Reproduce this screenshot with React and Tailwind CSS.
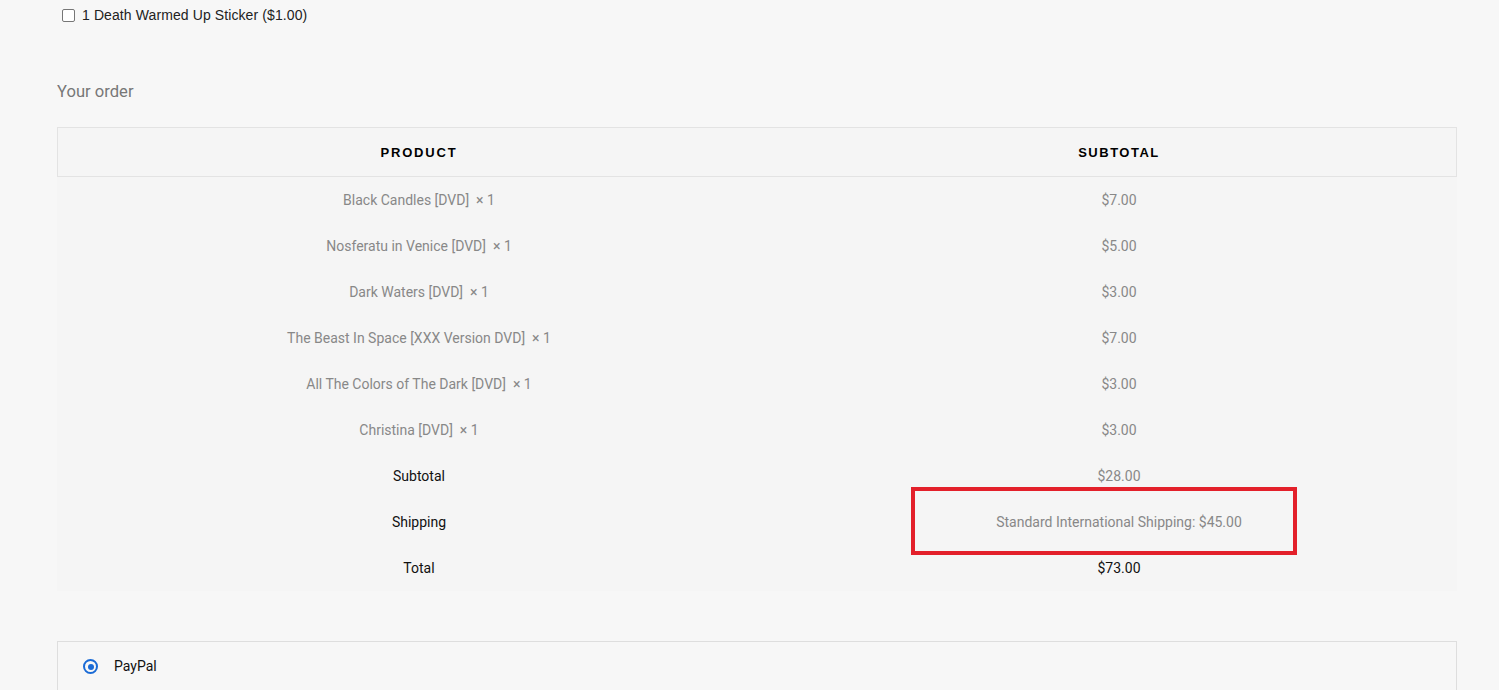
import React from 'react'

const items = [
  { name: 'Black Candles [DVD]', qty: 1, price: '$7.00' },
  { name: 'Nosferatu in Venice [DVD]', qty: 1, price: '$5.00' },
  { name: 'Dark Waters [DVD]', qty: 1, price: '$3.00' },
  { name: 'The Beast In Space [XXX Version DVD]', qty: 1, price: '$7.00' },
  { name: 'All The Colors of The Dark [DVD]', qty: 1, price: '$3.00' },
  { name: 'Christina [DVD]', qty: 1, price: '$3.00' },
]

const App = () => {
  return (
    <div className="min-h-[690px] bg-[#f7f7f7] font-['Roboto',sans-serif] overflow-hidden">
      <div className="px-[57px] pr-[42px]">
        <label className="flex items-center h-[30px] pl-[5px] font-['Liberation_Sans',Arial,sans-serif] text-[14px] tracking-[0.1px] text-[#222]">
          <span className="w-[13px] h-[13px] border border-[#767676] rounded-[2px] bg-white mr-[7px]" />
          1 Death Warmed Up Sticker ($1.00)
        </label>

        <h3 className="mt-[50px] text-[16.6px] leading-[24px] text-[#777] font-normal">Your order</h3>

        <table className="mt-[23px] w-full border-collapse bg-[#f5f5f5] text-[14px]">
          <thead>
            <tr className="h-[50px] outline outline-1 outline-[#e3e3e3] -outline-offset-1">
              <th className="w-[724px] pt-[2px] font-['Liberation_Sans',Arial,sans-serif] text-[13px] font-bold tracking-[1.8px] text-black">PRODUCT</th>
              <th className="pt-[2px] font-['Liberation_Sans',Arial,sans-serif] text-[13px] font-bold tracking-[1.5px] text-black">SUBTOTAL</th>
            </tr>
          </thead>
          <tbody>
            {items.map(item => (
              <tr key={item.name} className="h-[46px]">
                <td className="text-center text-[#888]">
                  {item.name}&nbsp; × {item.qty}
                </td>
                <td className="text-center text-[#888]">{item.price}</td>
              </tr>
            ))}
            <tr className="h-[46px]">
              <td className="text-center text-[#111]">Subtotal</td>
              <td className="text-center text-[#888]">$28.00</td>
            </tr>
            <tr className="h-[46px]">
              <td className="text-center text-[#111]">Shipping</td>
              <td className="text-center text-[#888] relative">
                Standard International Shipping: $45.00
                <span className="absolute left-[130px] top-[-12px] w-[386px] h-[68px] border-[4px] border-[#e3202a]" />
              </td>
            </tr>
            <tr className="h-[46px]">
              <td className="text-center text-[#111]">Total</td>
              <td className="text-center text-[#111]">$73.00</td>
            </tr>
          </tbody>
        </table>

        <div className="mt-[50px] border border-[#dedede] border-b-0 h-[60px] flex items-start pt-[15px] pl-[25px]">
          <span className="mt-[2px] w-[15px] h-[15px] rounded-full border-[2px] border-[#1a6bd6] flex items-center justify-center">
            <span className="w-[6px] h-[6px] rounded-full bg-[#1a6bd6]" />
          </span>
          <span className="ml-[16px] text-[14px] leading-[18px] text-[#111]">PayPal</span>
        </div>
      </div>
    </div>
  )
}

export default App
